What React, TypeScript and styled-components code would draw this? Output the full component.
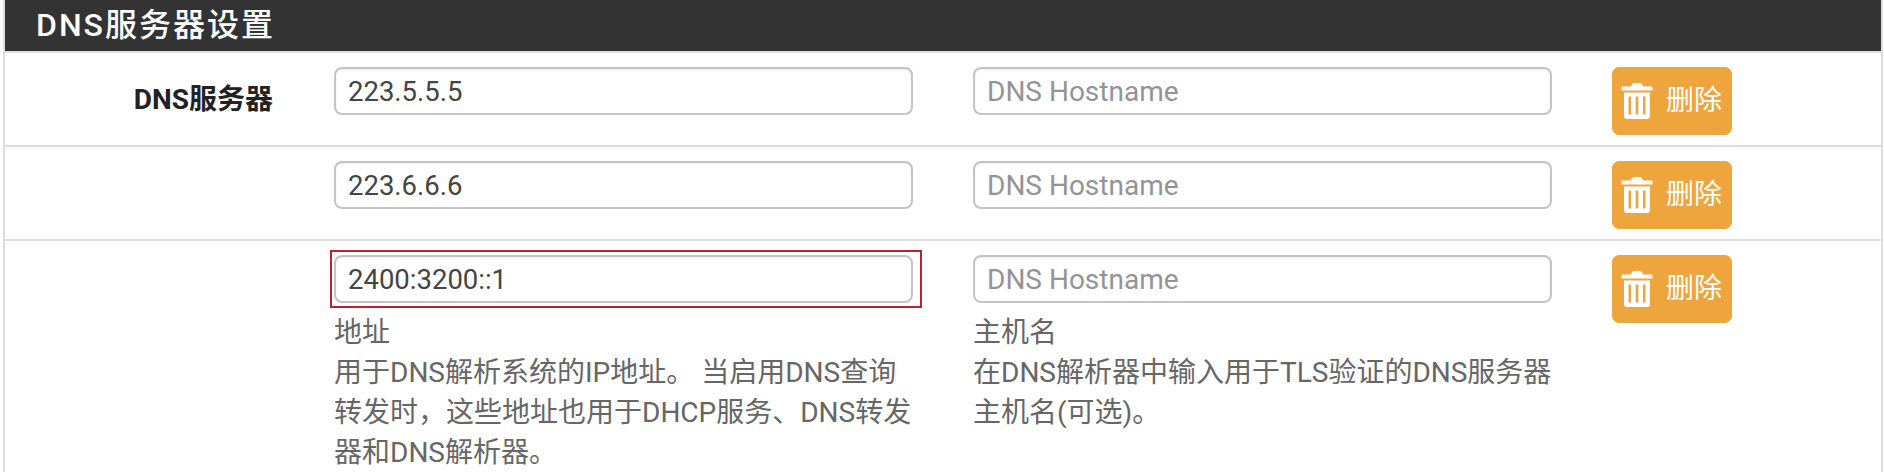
import React from "react";
import styled, { createGlobalStyle } from "styled-components";

const Global = createGlobalStyle`
  html, body { margin: 0; padding: 0; background: #fff; }
  body { font-family: Roboto, "Noto Sans CJK SC", sans-serif; overflow: hidden; }
`;

const Panel = styled.section`
  width: 1880px;
  height: 472px;
  margin-left: 3px;
  box-sizing: border-box;
  border-left: 2px solid #ddd;
  border-right: 2px solid #ddd;
  overflow: hidden;
`;

const Heading = styled.h2`
  margin: 0;
  height: 53px;
  box-sizing: border-box;
  padding-left: 31px;
  background: #333;
  border-bottom: 2px solid #ddd;
  color: #fff;
  font-size: 32px;
  font-weight: 500;
  line-height: 50px;
  letter-spacing: 2px;
`;

const Row = styled.div<{ $last?: boolean }>`
  display: grid;
  grid-template-columns: 269px 579px 579px 120px;
  column-gap: 60px;
  align-items: start;
  box-sizing: border-box;
  height: ${(p) => (p.$last ? "auto" : "94px")};
  padding-top: 14px;
  border-bottom: ${(p) => (p.$last ? "none" : "2px solid #ddd")};
`;

const Label = styled.div`
  padding: 17px 1px 0 0;
  text-align: right;
  color: #222;
  font-size: 28px;
  font-weight: 700;
  line-height: 32px;
`;

const Field = styled.div`
  min-width: 0;
`;

const Flagged = styled.div`
  position: relative;

  &::after {
    content: "";
    position: absolute;
    inset: -5px -9px -5px -4px;
    border: 2px solid #b9242c;
    pointer-events: none;
  }
`;

const TextInput = styled.input`
  display: block;
  width: 100%;
  height: 48px;
  box-sizing: border-box;
  padding: 0 12px;
  border: 2px solid #c4c4c4;
  border-radius: 8px;
  box-shadow: inset 0 1px 2px rgba(0, 0, 0, 0.08);
  background: #fff;
  color: #444;
  font-family: Roboto, "Noto Sans CJK SC", sans-serif;
  font-size: 27.5px;
  outline: none;

  &::placeholder {
    color: #949494;
    opacity: 1;
    font-size: 28px;
  }
`;

const Help = styled.div`
  margin-top: 10px;
  color: #666;
  font-size: 28px;
  line-height: 40px;
`;

const DeleteButton = styled.button`
  display: flex;
  align-items: center;
  width: 120px;
  height: 68px;
  box-sizing: border-box;
  padding: 0 0 0 8px;
  border: 1px solid #eba63f;
  border-radius: 7px;
  background: #efa53e;
  color: #fff;
  font-family: Roboto, "Noto Sans CJK SC", sans-serif;
  font-size: 28px;
  line-height: 32px;
`;

const Glyph = styled.svg`
  width: 32px;
  height: 38px;
  flex: none;
  margin-right: 13px;
  fill: #fff;
`;

const TrashIcon = () => (
  <Glyph viewBox="0 0 32 38" aria-hidden="true">
    <path d="M10 4.500C10.500 2.500 11.500 1 13 1h6c1.500 0 2.500 1.500 3 3.500h8c1 0 1.500.5 1.500 1.500v2.500H.5V6C.5 5 1 4.500 2 4.500Z" />
    <path
      fillRule="evenodd"
      d="M3 10.500h26V34c0 2-1 3-3 3H6c-2 0-3-1-3-3ZM7.500 14.500v18H10v-18ZM14.700 14.500v18h2.600v-18ZM22 14.500v18h2.500v-18Z"
    />
  </Glyph>
);

const rows = ["223.5.5.5", "223.6.6.6", "2400:3200::1"];

export default function App() {
  return (
    <>
      <Global />
      <Panel>
        <Heading>DNS服务器设置</Heading>
        {rows.map((address, i) => {
          const last = i === rows.length - 1;
          return (
            <Row key={address} $last={last}>
              <Label>{i === 0 ? "DNS服务器" : ""}</Label>
              <Field>
                {last ? (
                  <Flagged>
                    <TextInput defaultValue={address} />
                  </Flagged>
                ) : (
                  <TextInput defaultValue={address} />
                )}
                {last && (
                  <Help>
                    地址
                    <br />
                    用于DNS解析系统的IP地址。 当启用DNS查询
                    <br />
                    转发时，这些地址也用于DHCP服务、DNS转发
                    <br />
                    器和DNS解析器。
                  </Help>
                )}
              </Field>
              <Field>
                <TextInput placeholder="DNS Hostname" />
                {last && (
                  <Help>
                    主机名
                    <br />
                    在DNS解析器中输入用于TLS验证的DNS服务器
                    <br />
                    主机名(可选)。
                  </Help>
                )}
              </Field>
              <DeleteButton type="button">
                <TrashIcon />
                删除
              </DeleteButton>
            </Row>
          );
        })}
      </Panel>
    </>
  );
}
